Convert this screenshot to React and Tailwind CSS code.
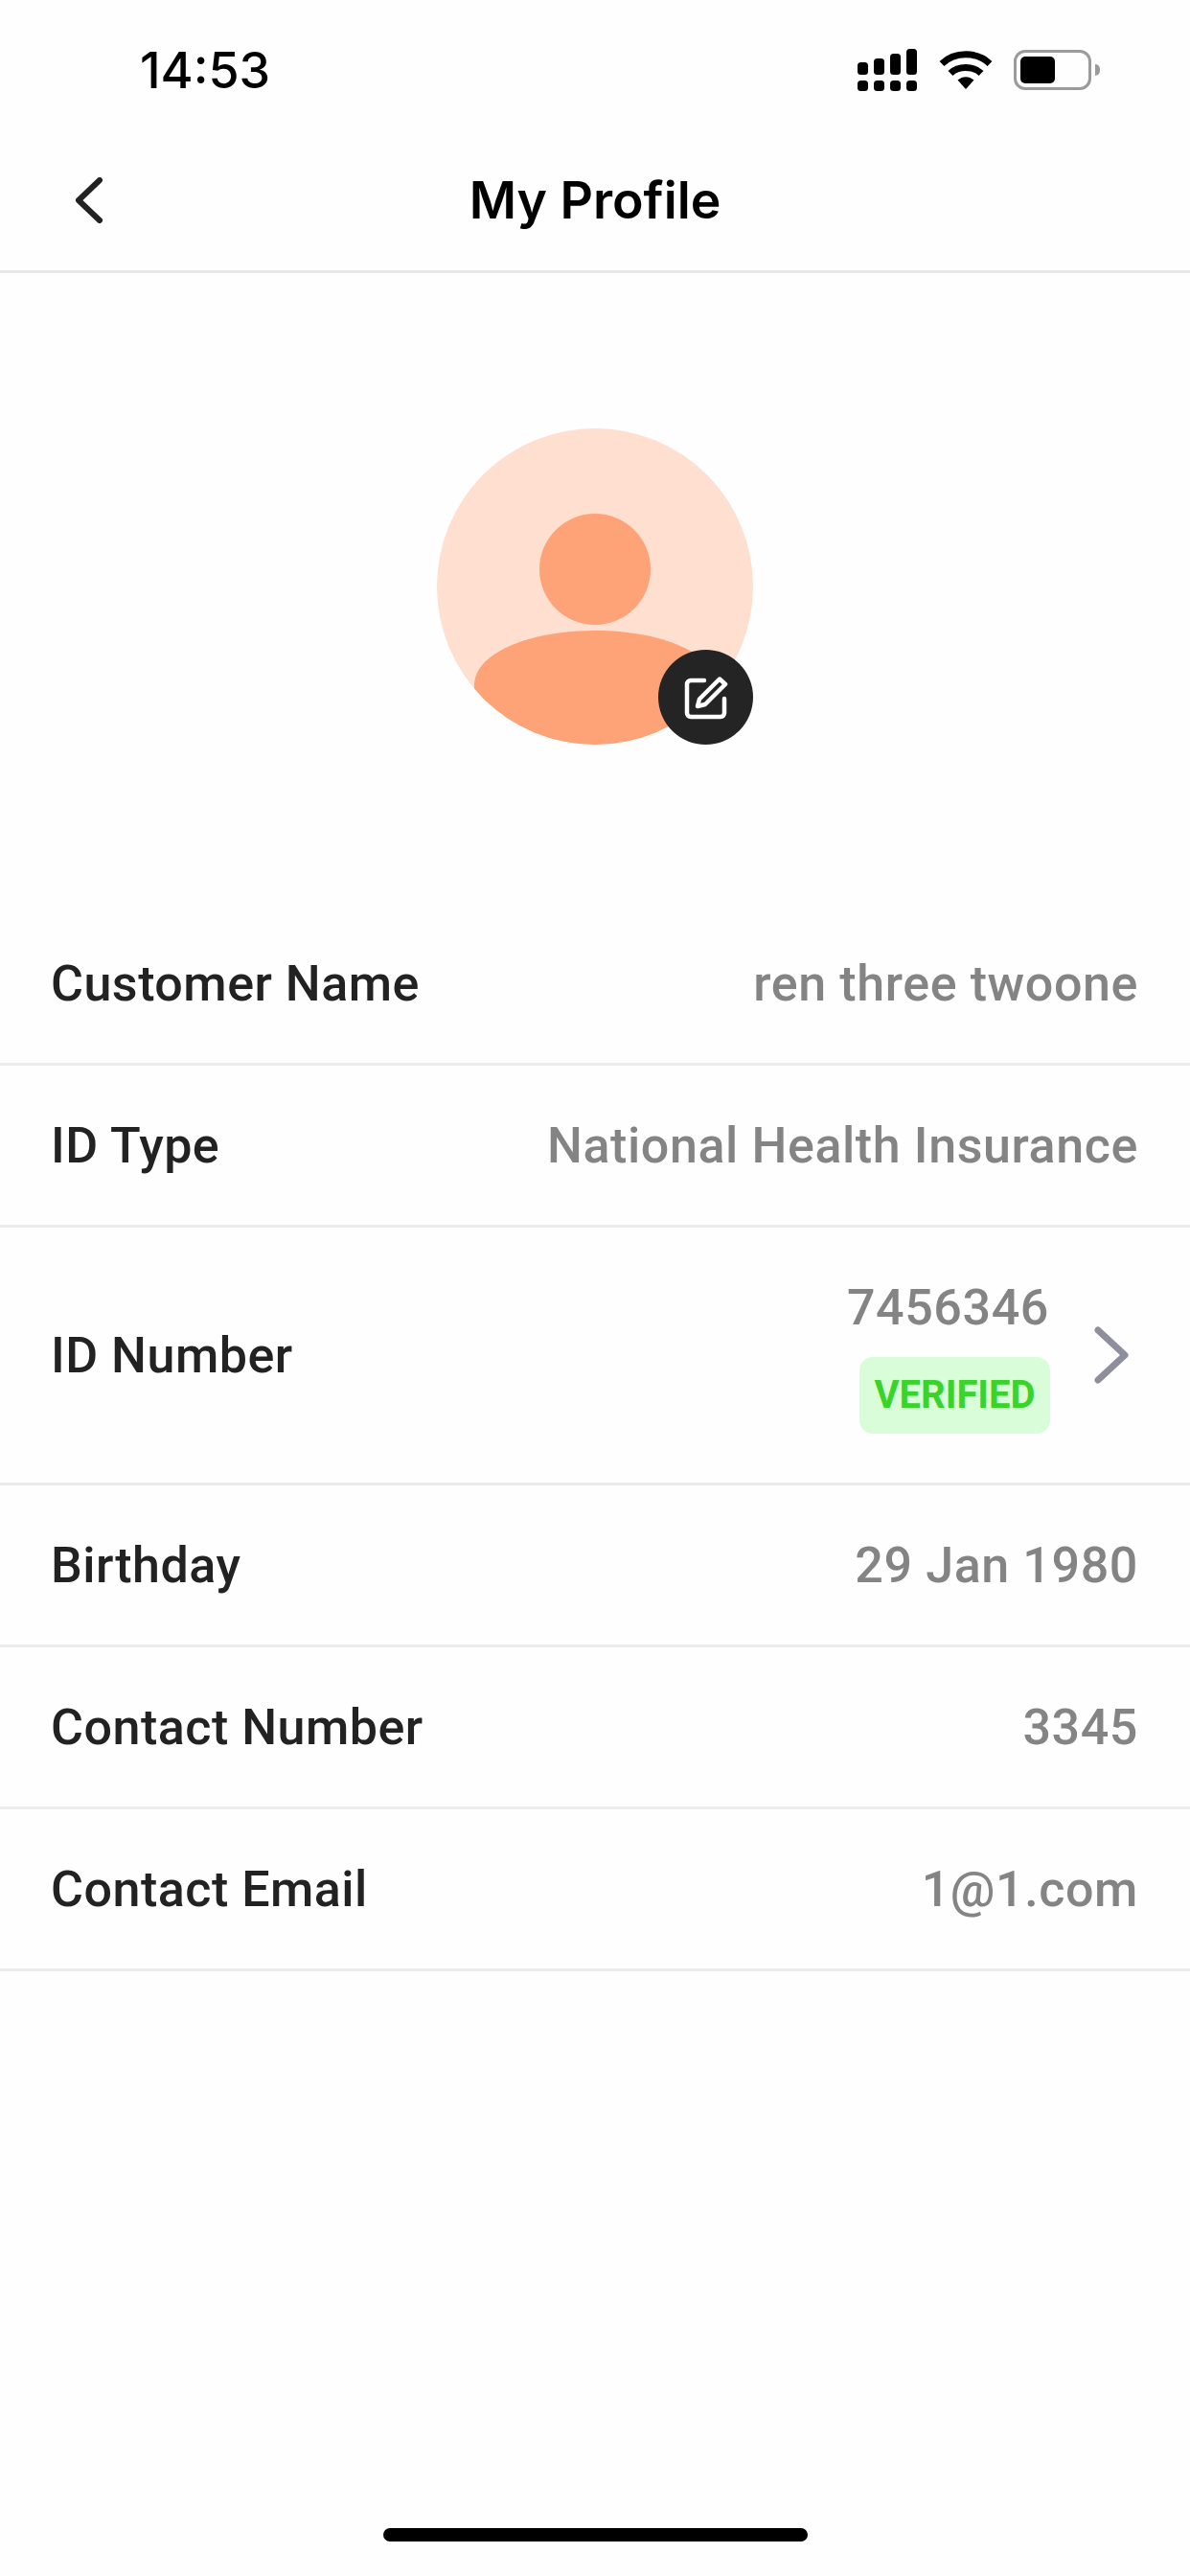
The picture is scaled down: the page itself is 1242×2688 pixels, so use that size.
const rows = [
  { label: "Customer Name", value: "ren three twoone" },
  { label: "ID Type", value: "National Health Insurance" },
  { label: "ID Number", verified: true },
  { label: "Birthday", value: "29 Jan 1980" },
  { label: "Contact Number", value: "3345" },
  { label: "Contact Email", value: "1@1.com" },
];

function Signal() {
  return (
    <svg width="64" height="44" viewBox="0 0 64 44" fill="#000">
      <rect x="1" y="14" width="11" height="13" rx="3.5" />
      <rect x="18" y="10" width="11" height="17" rx="3.5" />
      <rect x="35" y="5" width="11" height="22" rx="3.5" />
      <rect x="52" y="0" width="11" height="27" rx="3.5" />
      <rect x="1" y="33" width="11" height="11" rx="3.5" />
      <rect x="18" y="33" width="11" height="11" rx="3.5" />
      <rect x="35" y="33" width="11" height="11" rx="3.5" />
      <rect x="52" y="33" width="11" height="11" rx="3.5" />
    </svg>
  );
}

function Wifi() {
  return (
    <svg width="56" height="42" viewBox="0 0 56 42" fill="none" stroke="#000" strokeWidth="7">
      <path d="M3 14.5C16.5 1.5 39.5 1.5 53 14.5" />
      <path d="M12 24.5C20 16.5 36 16.5 44 24.5" />
      <path d="M19.5 31.5L28 41L36.5 31.5C31 27 25 27 19.5 31.5Z" fill="#000" stroke="none" />
    </svg>
  );
}

function Battery() {
  return (
    <div className="flex items-center">
      <div className="w-[81px] h-[42px] rounded-[12px] border-[3px] border-[#9b9b9b] p-[4px]">
        <div className="w-[36px] h-full rounded-[5px] bg-black" />
      </div>
      <div className="w-[5px] h-[12px] ml-[4px] rounded-r-full bg-[#9b9b9b]" />
    </div>
  );
}

function Avatar() {
  return (
    <div className="relative w-[330px] h-[330px]">
      <svg width="330" height="330" viewBox="0 0 330 330">
        <defs>
          <clipPath id="avatar-circle">
            <circle cx="165" cy="165" r="165" />
          </clipPath>
        </defs>
        <circle cx="165" cy="165" r="165" fill="#fedfd0" />
        <circle cx="165" cy="147" r="58" fill="#fea277" />
        <path
          d="M39 268C39 235 95 211 165 211C235 211 291 235 291 268V330H39Z"
          fill="#fea277"
          clipPath="url(#avatar-circle)"
        />
      </svg>
      <div className="absolute right-0 bottom-0 w-[99px] h-[99px] rounded-full bg-[#242424] flex items-center justify-center">
        <svg width="46" height="46" viewBox="0 0 46 46" fill="none" stroke="#fff" strokeWidth="4.5" strokeLinecap="round" strokeLinejoin="round">
          <path d="M21 5H7A4 4 0 0 0 3 9V39A4 4 0 0 0 7 43H38A4 4 0 0 0 42 39V24" />
          <path d="M37 3.5L43 9L22 30L14 32L16 24.5Z" />
        </svg>
      </div>
    </div>
  );
}

function Row({ label, value, verified }) {
  return (
    <div
      className={
        "flex items-center justify-between border-b-[3px] border-[#ebebeb] pl-[53px] " +
        (verified ? "h-[269px] pr-[64px]" : "h-[169px] pr-[54px]")
      }
    >
      <span className="pt-[2px] font-['Roboto',sans-serif] font-medium text-[52px] leading-none tracking-[0.5px] text-[#222222]">{label}</span>
      {verified ? (
        <div className="flex items-center gap-[46px]">
          <div className="flex flex-col items-end pt-[7px]">
            <span className="mr-[1px] font-['Roboto',sans-serif] font-medium text-[52px] leading-none tracking-[0.6px] text-[#848484]">7456346</span>
            <span className="mt-[25px] w-[199px] h-[80px] rounded-[14px] bg-[#d9fdd8] flex items-center justify-center font-['Roboto',sans-serif] font-bold text-[40px] leading-none text-[#38d429]">
              VERIFIED
            </span>
          </div>
          <svg width="36" height="60" viewBox="0 0 36 60" fill="none" stroke="#8e8e9c" strokeWidth="7" strokeLinecap="round" strokeLinejoin="round">
            <path d="M4 4L32 30L4 56" />
          </svg>
        </div>
      ) : (
        <span className="pt-[2px] font-['Roboto',sans-serif] font-medium text-[52px] leading-none tracking-[0.6px] text-[#848484]">{value}</span>
      )}
    </div>
  );
}

export default function App() {
  return (
    <div className="w-[1242px] h-[2688px] bg-[#fefefe] flex flex-col">
      <div className="h-[130px] flex items-center justify-between pl-[146px] pr-[94px] shrink-0 pt-[18px]">
        <span className="font-['Inter',sans-serif] font-medium text-[52px] leading-none text-black">14:53</span>
        <div className="flex items-center gap-[22px] -mt-[2px]">
          <Signal />
          <Wifi />
          <Battery />
        </div>
      </div>
      <div className="relative h-[155px] shrink-0 border-b-[3px] border-[#e8e8e8] flex items-center justify-center">
        <svg className="absolute left-[76px] top-[55px]" width="32" height="48" viewBox="0 0 32 48" fill="none" stroke="#222" strokeWidth="6" strokeLinecap="round" strokeLinejoin="round">
          <path d="M28 3L6 24L28 45" />
        </svg>
        <span className="pt-[5px] font-['Inter',sans-serif] font-semibold text-[53.5px] leading-none text-black">My Profile</span>
      </div>
      <div className="flex justify-center pt-[162px] pb-[166px]">
        <Avatar />
      </div>
      <div className="flex flex-col">
        {rows.map((r) => (
          <Row key={r.label} {...r} />
        ))}
      </div>
      <div className="mt-auto mb-[36px] self-center w-[443px] h-[14px] rounded-full bg-black" />
    </div>
  );
}
